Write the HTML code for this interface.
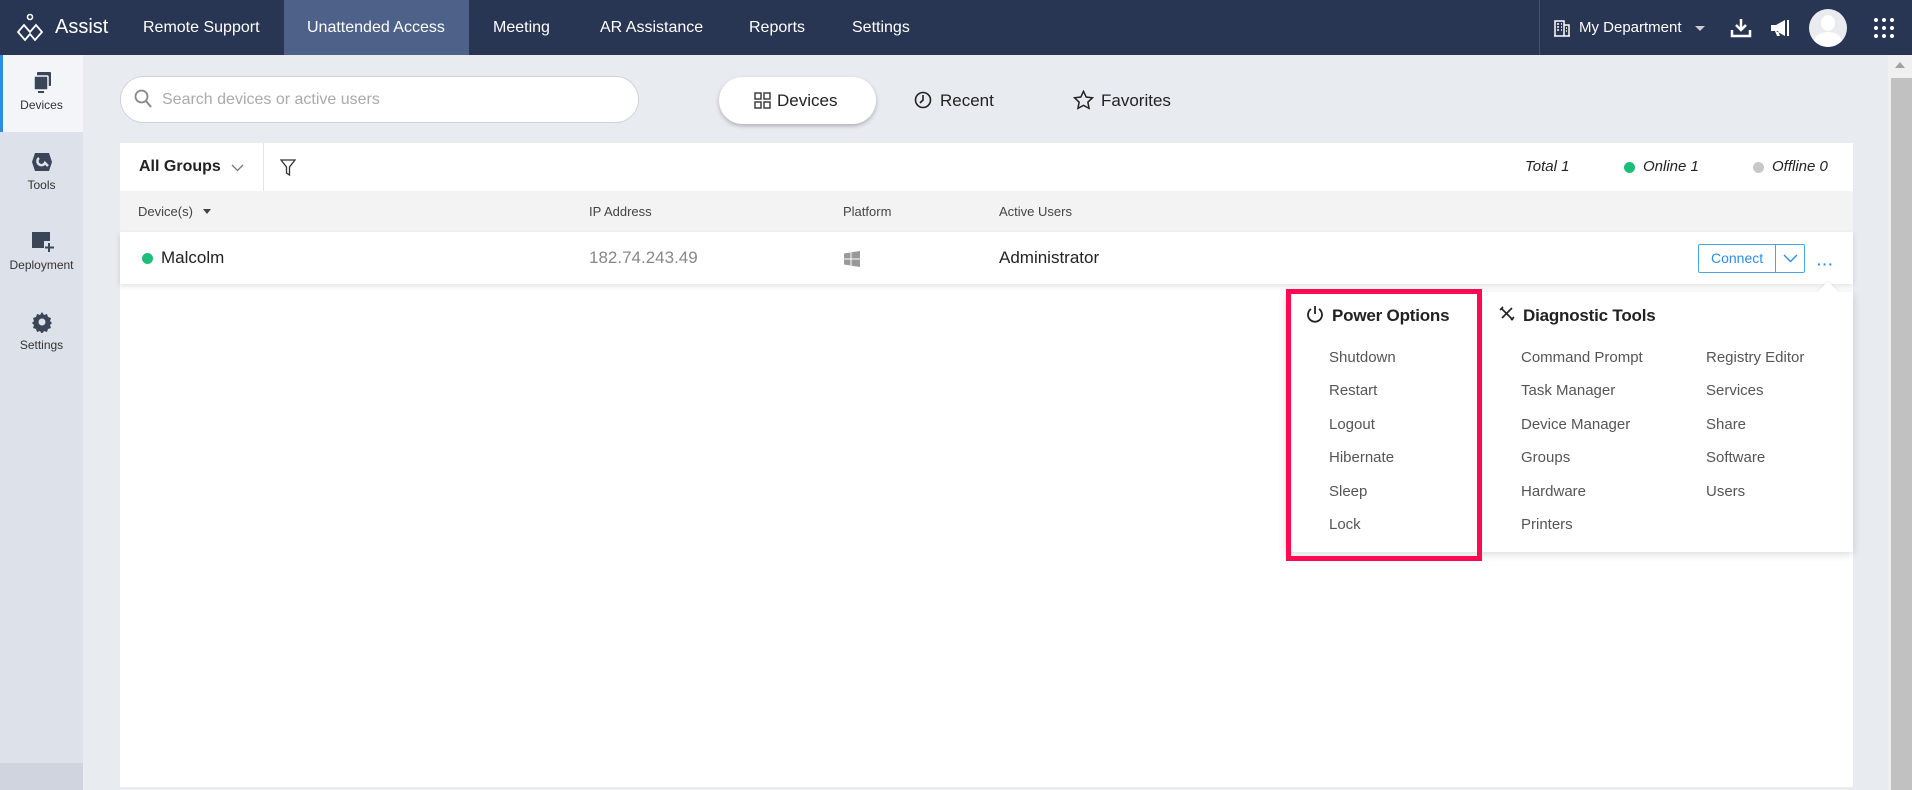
<!DOCTYPE html>
<html><head><meta charset="utf-8"><style>
*{box-sizing:border-box;margin:0;padding:0}
body{width:1912px;height:790px;overflow:hidden;background:#e8ebf0;font-family:"Liberation Sans",sans-serif;position:relative;color:#222}
.a{position:absolute;white-space:nowrap}
.nav{left:0;top:0;width:1912px;height:55px;background:#283553}
.nv{color:#fff;font-size:16px;top:19px}
.side{left:0;top:55px;width:83px;height:735px;background:#dde1ea}
.sl{font-size:12px;color:#333;width:83px;text-align:center;left:0}
.hd{font-size:13px;color:#444;top:204px}
.mi{font-size:15px;color:#555}
</style></head><body>
<div class="a nav"></div>
<div class="a" style="left:284px;top:0;width:185px;height:55px;background:#4d6189"></div>
<svg class="a" style="left:16px;top:13px" width="28" height="30" viewBox="0 0 28 30"><circle cx="14" cy="4" r="2.5" fill="none" stroke="#fff" stroke-width="1.6"/><path d="M8 12 L2 19 L9 27 L14 21 L19 27 L26 19 L20 12 L14 19 Z" fill="none" stroke="#fff" stroke-width="1.8"/></svg>
<div class="a" style="left:55px;top:16px;color:#fff;font-size:20px">Assist</div>
<div class="a nv" style="left:143px">Remote Support</div>
<div class="a nv" style="left:307px">Unattended Access</div>
<div class="a nv" style="left:493px">Meeting</div>
<div class="a nv" style="left:600px">AR Assistance</div>
<div class="a nv" style="left:749px">Reports</div>
<div class="a nv" style="left:852px">Settings</div>
<div class="a" style="left:1539px;top:0;width:1px;height:55px;background:#43506e"></div>
<svg class="a" style="left:1553px;top:19px" width="18" height="18" viewBox="0 0 18 18"><path d="M2 17V2h9v15M11 6h5v11M1 17h16M4 5h2M4 8h2M4 11h2M8 5h1M8 8h1M8 11h1M13 9h1M13 12h1" stroke="#fff" stroke-width="1.5" fill="none"/></svg>
<div class="a nv" style="left:1579px;top:19px;font-size:15px">My Department</div>
<div class="a" style="left:1695px;top:26px;border:5px solid transparent;border-top-color:#ccc"></div>
<svg class="a" style="left:1730px;top:17px" width="22" height="22" viewBox="0 0 22 22"><path d="M11 2v10M6 8l5 5 5-5" stroke="#fff" stroke-width="2.5" fill="none"/><path d="M2 13v6h18v-6" stroke="#fff" stroke-width="2.5" fill="none"/></svg>
<svg class="a" style="left:1769px;top:18px" width="22" height="20" viewBox="0 0 22 20"><path d="M2 7h5l9-5v16l-9-5H2z M6 13l2 5h3l-2-5" fill="#fff"/><rect x="18" y="2" width="2" height="16" fill="#fff"/></svg>
<div class="a" style="left:1809px;top:9px;width:38px;height:38px;border-radius:50%;background:#e9ebee;overflow:hidden"><div class="a" style="left:12px;top:6px;width:14px;height:16px;border-radius:50%;background:#fff"></div><div class="a" style="left:5px;top:23px;width:28px;height:20px;border-radius:50%;background:#fff"></div></div>
<svg class="a" style="left:1873px;top:17px" width="22" height="22"><g fill="#fff"><circle cx="3" cy="3" r="2"/><circle cx="11" cy="3" r="2"/><circle cx="19" cy="3" r="2"/><circle cx="3" cy="11" r="2"/><circle cx="11" cy="11" r="2"/><circle cx="19" cy="11" r="2"/><circle cx="3" cy="19" r="2"/><circle cx="11" cy="19" r="2"/><circle cx="19" cy="19" r="2"/></g></svg>

<div class="a side"></div>
<div class="a" style="left:0;top:55px;width:83px;height:77px;background:#f4f5f8;border-left:3px solid #2b8de6"></div>
<svg class="a" style="left:32px;top:71px" width="22" height="24"><rect x="5" y="1" width="14" height="14" rx="1" fill="#3a4558"/><rect x="2" y="5" width="14" height="14" rx="1" fill="#3a4558" stroke="#f4f5f8" stroke-width="1.5"/><rect x="6" y="20" width="6" height="2" fill="#3a4558"/></svg>
<div class="a sl" style="top:98px">Devices</div>
<svg class="a" style="left:31px;top:151px" width="22" height="22"><path d="M4 2h14l3 9-3 9H4L1 11z" fill="#3a4558"/><path d="M8 7a4 4 0 1 0 6 5l3 3" stroke="#dde1ea" stroke-width="2.5" fill="none"/></svg>
<div class="a sl" style="top:178px">Tools</div>
<svg class="a" style="left:31px;top:231px" width="24" height="22"><path d="M1 1h18v9h-6v7H1z" fill="#3a4558"/><path d="M18 12v9M14 16.5h9" stroke="#3a4558" stroke-width="2"/></svg>
<div class="a sl" style="top:258px">Deployment</div>
<svg class="a" style="left:31px;top:311px" width="22" height="22" viewBox="0 0 22 22"><path d="M11 1l2 3 3-1 1 3 3 1-1 3 2 2-2 2 1 3-3 1-1 3-3-1-2 3-2-3-3 1-1-3-3-1 1-3-2-2 2-2-1-3 3-1 1-3 3 1z" fill="#3a4558"/><circle cx="11" cy="11" r="3.5" fill="#dde1ea"/></svg>
<div class="a sl" style="top:338px">Settings</div>
<div class="a" style="left:0;top:763px;width:83px;height:27px;background:#cfd4de"></div>

<div class="a" style="left:1888px;top:55px;width:24px;height:735px;background:#f0f0f0"></div>
<div class="a" style="left:1891px;top:78px;width:21px;height:712px;background:#c1c1c1"></div>
<div class="a" style="left:1895px;top:62px;border:5px solid transparent;border-bottom:6px solid #a3a3a3;border-top:0"></div>

<div class="a" style="left:120px;top:76px;width:519px;height:47px;border-radius:24px;background:#fff;border:1px solid #cfd3d9"></div>
<svg class="a" style="left:134px;top:89px" width="18" height="20"><circle cx="7.5" cy="7.5" r="6" stroke="#888" stroke-width="1.8" fill="none"/><path d="M12 12l5 6" stroke="#888" stroke-width="2"/></svg>
<div class="a" style="left:162px;top:91px;font-size:16px;color:#aaa">Search devices or active users</div>
<div class="a" style="left:719px;top:77px;width:157px;height:47px;border-radius:24px;background:#fff;box-shadow:0 2px 4px rgba(0,0,0,.25)"></div>
<svg class="a" style="left:754px;top:92px" width="17" height="17"><g fill="none" stroke="#333" stroke-width="1.4"><rect x="1" y="1" width="6" height="6"/><rect x="10" y="1" width="6" height="6"/><rect x="1" y="10" width="6" height="6"/><rect x="10" y="10" width="6" height="6"/></g></svg>
<div class="a" style="left:777px;top:91px;font-size:17px;color:#222">Devices</div>
<svg class="a" style="left:914px;top:91px" width="18" height="18"><circle cx="9" cy="9" r="7.5" stroke="#222" stroke-width="1.6" fill="none"/><path d="M9 4v5l-3 3" stroke="#222" stroke-width="1.6" fill="none"/></svg>
<div class="a" style="left:940px;top:91px;font-size:17px">Recent</div>
<svg class="a" style="left:1073px;top:90px" width="21" height="20" viewBox="0 0 24 23"><path d="M12 1.5l3.1 6.6 7.2.9-5.3 5 1.4 7.1L12 17.6l-6.4 3.5L7 14 1.7 9l7.2-.9z" fill="none" stroke="#222" stroke-width="1.7"/></svg>
<div class="a" style="left:1101px;top:91px;font-size:17px">Favorites</div>

<div class="a" style="left:120px;top:143px;width:1733px;height:644px;background:#fff"></div>
<div class="a" style="left:139px;top:158px;font-size:16px;font-weight:bold;color:#222">All Groups</div>
<svg class="a" style="left:231px;top:164px" width="13" height="8"><path d="M1 1l5.5 5.5L12 1" stroke="#777" fill="none" stroke-width="1.3"/></svg>
<div class="a" style="left:263px;top:143px;width:1px;height:48px;background:#e3e3e3"></div>
<svg class="a" style="left:280px;top:159px" width="16" height="18"><path d="M1 1h14l-5.5 7v8l-3-2V8z" fill="none" stroke="#333" stroke-width="1.3"/></svg>
<div class="a" style="left:1525px;top:158px;font-size:15px;font-style:italic;color:#222">Total 1</div>
<div class="a" style="left:1624px;top:162px;width:11px;height:11px;border-radius:50%;background:#1cbe7a"></div>
<div class="a" style="left:1643px;top:158px;font-size:15px;font-style:italic;color:#222">Online 1</div>
<div class="a" style="left:1753px;top:162px;width:11px;height:11px;border-radius:50%;background:#c8c8c8"></div>
<div class="a" style="left:1772px;top:158px;font-size:15px;font-style:italic;color:#222">Offline 0</div>

<div class="a" style="left:120px;top:191px;width:1733px;height:41px;background:#f3f3f3"></div>
<div class="a hd" style="left:138px">Device(s)</div>
<div class="a" style="left:203px;top:209px;border:4.5px solid transparent;border-top:5px solid #444;border-bottom:0"></div>
<div class="a hd" style="left:589px">IP Address</div>
<div class="a hd" style="left:843px">Platform</div>
<div class="a hd" style="left:999px">Active Users</div>

<div class="a" style="left:120px;top:232px;width:1733px;height:52px;background:#fff;box-shadow:0 2px 5px rgba(0,0,0,.12)"></div>
<div class="a" style="left:142px;top:253px;width:11px;height:11px;border-radius:50%;background:#1cbe7a"></div>
<div class="a" style="left:161px;top:248px;font-size:17px;color:#222">Malcolm</div>
<div class="a" style="left:589px;top:248px;font-size:17px;color:#888">182.74.243.49</div>
<svg class="a" style="left:844px;top:251px" width="16" height="16"><g fill="#999"><path d="M0 2.5l6.5-1v6H0z"/><path d="M7.5 1.3L16 0v7.5H7.5z"/><path d="M0 8.5h6.5v6L0 13.5z"/><path d="M7.5 8.5H16V16l-8.5-1.3z"/></g></svg>
<div class="a" style="left:999px;top:248px;font-size:17px;color:#222">Administrator</div>
<div class="a" style="left:1698px;top:244px;width:107px;height:29px;border:1px solid #4ba3e8;border-radius:2px"></div>
<div class="a" style="left:1775px;top:244px;width:1px;height:29px;background:#4ba3e8"></div>
<div class="a" style="left:1711px;top:250px;font-size:14px;color:#2b8de6">Connect</div>
<svg class="a" style="left:1783px;top:254px" width="15" height="9"><path d="M1 1l6.5 6.5L14 1" stroke="#2b8de6" fill="none" stroke-width="1.4"/></svg>
<div class="a" style="left:1817px;top:256px;font-size:14px;color:#2b8de6;letter-spacing:1px;font-weight:bold">···</div>

<div class="a" style="left:1286px;top:292px;width:567px;height:260px;background:#fff;box-shadow:0 2px 8px rgba(0,0,0,.15)"></div>
<div class="a" style="left:1821px;top:284px;width:14px;height:14px;background:#fff;transform:rotate(45deg);box-shadow:-1px -1px 2px rgba(0,0,0,.06)"></div>
<div class="a" style="left:1286px;top:289px;width:196px;height:272px;border:5px solid #ff0a52"></div>
<svg class="a" style="left:1306px;top:305px" width="18" height="19"><path d="M9 1v8" stroke="#222" stroke-width="1.8"/><path d="M5 4a7 7 0 1 0 8 0" stroke="#222" stroke-width="1.8" fill="none"/></svg>
<div class="a" style="left:1332px;top:306px;font-size:17px;font-weight:bold;color:#222;letter-spacing:-0.2px">Power Options</div>
<div class="a mi" style="left:1329px;top:349px">Shutdown</div>
<div class="a mi" style="left:1329px;top:382px">Restart</div>
<div class="a mi" style="left:1329px;top:416px">Logout</div>
<div class="a mi" style="left:1329px;top:449px">Hibernate</div>
<div class="a mi" style="left:1329px;top:483px">Sleep</div>
<div class="a mi" style="left:1329px;top:516px">Lock</div>
<svg class="a" style="left:1499px;top:306px" width="16" height="16"><path d="M2 2l12 12M13 2L3 12M1 4l3-3M12 14l3-3" stroke="#222" stroke-width="1.6"/></svg>
<div class="a" style="left:1523px;top:306px;font-size:17px;font-weight:bold;color:#222;letter-spacing:-0.2px">Diagnostic Tools</div>
<div class="a mi" style="left:1521px;top:349px">Command Prompt</div>
<div class="a mi" style="left:1521px;top:382px">Task Manager</div>
<div class="a mi" style="left:1521px;top:416px">Device Manager</div>
<div class="a mi" style="left:1521px;top:449px">Groups</div>
<div class="a mi" style="left:1521px;top:483px">Hardware</div>
<div class="a mi" style="left:1521px;top:516px">Printers</div>
<div class="a mi" style="left:1706px;top:349px">Registry Editor</div>
<div class="a mi" style="left:1706px;top:382px">Services</div>
<div class="a mi" style="left:1706px;top:416px">Share</div>
<div class="a mi" style="left:1706px;top:449px">Software</div>
<div class="a mi" style="left:1706px;top:483px">Users</div>
</body></html>
